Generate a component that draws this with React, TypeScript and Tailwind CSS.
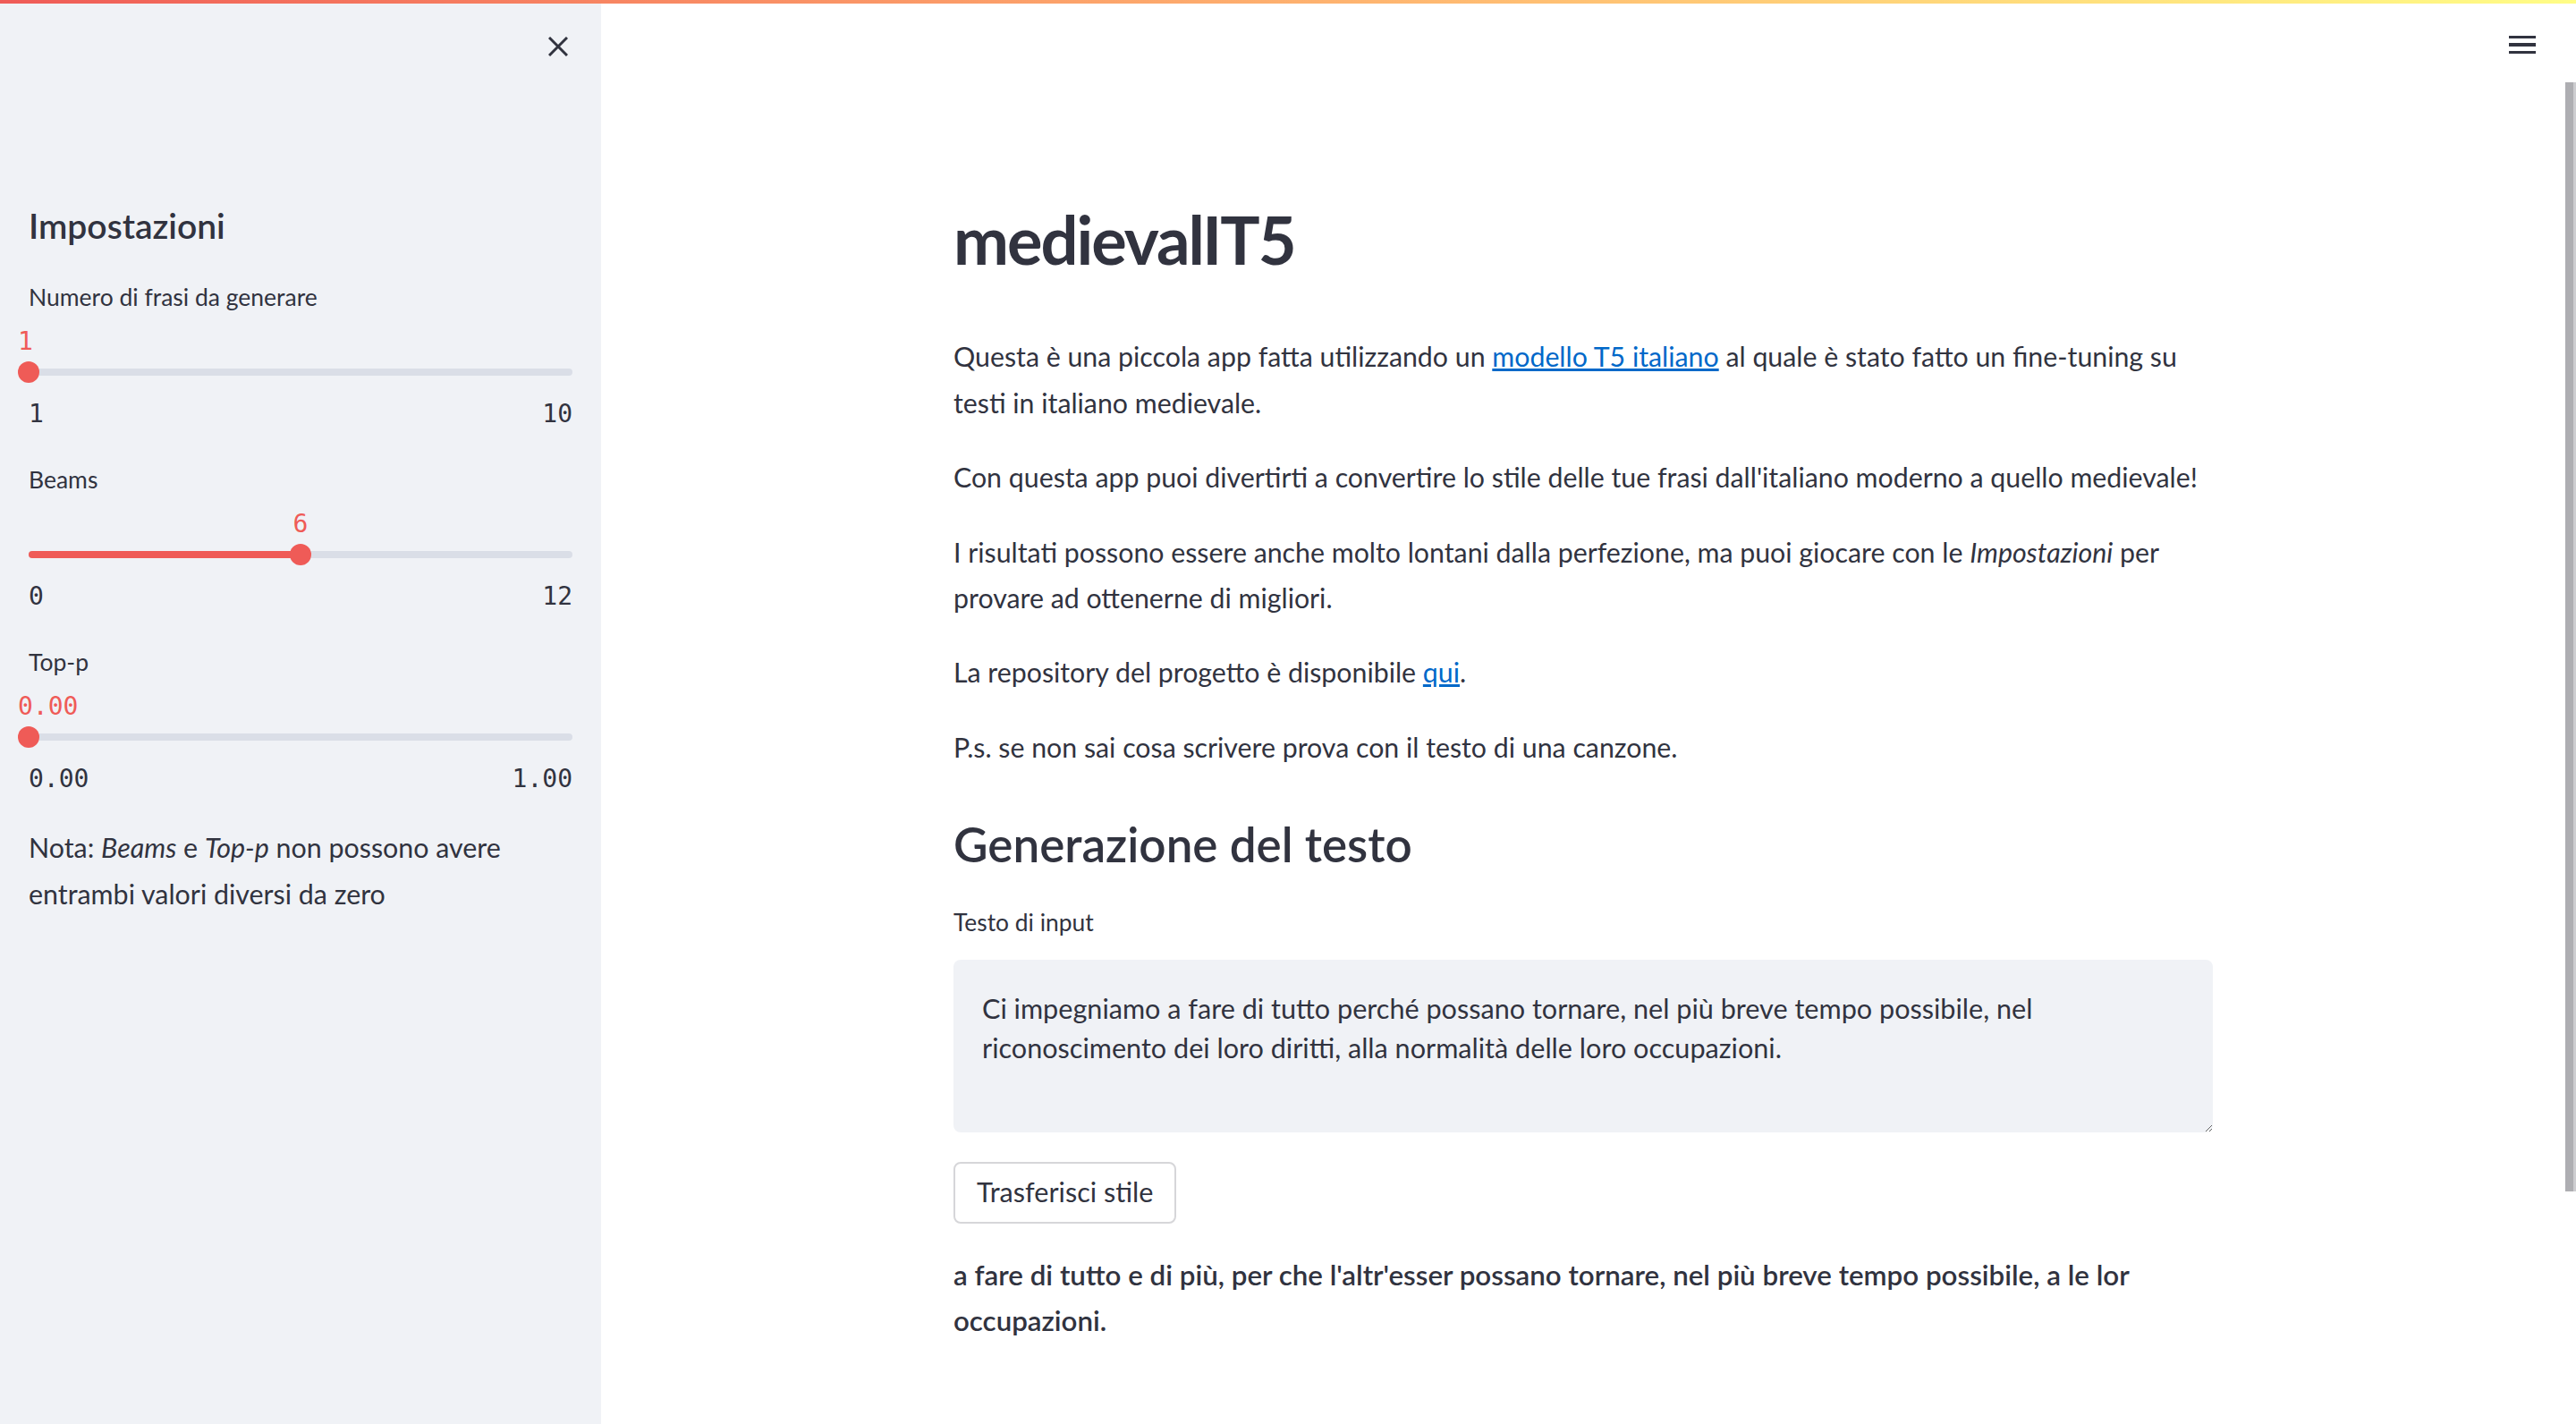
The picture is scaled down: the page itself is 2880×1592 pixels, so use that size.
import React from 'react';

const sans = "font-['Lato','Noto_Sans',sans-serif]";
const mono = "font-['DejaVu_Sans_Mono','Liberation_Mono',monospace]";

type SliderProps = {
    label: string;
    value: string;
    min: string;
    max: string;
    pct: number;
    first?: boolean;
};

function Slider({ label, value, min, max, pct, first }: SliderProps) {
    return (
        <div className={first ? 'mt-[29.6px]' : 'mt-[32.7px]'}>
            <div className="h-[44.8px] text-[26.5px] leading-[44.8px]">{label}</div>

            {/* value shown over the thumb */}
            <div className="relative mt-[10px] h-[36px]">
                <div
                    className={`absolute top-0 whitespace-nowrap text-[28px] leading-[36px] text-[#ef5b57] ${mono} ${pct === 0 ? '' : '-translate-x-1/2'}`}
                    style={pct === 0 ? { left: -12 } : { left: `${pct * 100}%` }}
                >
                    {value}
                </div>
            </div>

            {/* track */}
            <div className="relative mt-[3.5px] h-[24px]">
                <div className="absolute left-0 right-0 top-[8px] h-[8px] rounded-full bg-[#dadee7]" />
                <div
                    className="absolute left-0 top-[8px] h-[8px] rounded-full bg-[#ef5b57]"
                    style={{ width: `${pct * 100}%` }}
                />
                <div
                    className="absolute top-0 h-[24px] w-[24px] -translate-x-1/2 rounded-full bg-[#ef5b57]"
                    style={{ left: `${pct * 100}%` }}
                />
            </div>

            <div className={`mt-[17px] flex h-[36px] justify-between text-[28px] leading-[36px] text-[#31333f] ${mono}`}>
                <span>{min}</span>
                <span>{max}</span>
            </div>
        </div>
    );
}

export default function App() {
    return (
        <div className={`relative flex h-[1592px] w-[2880px] overflow-hidden bg-white text-[#31333f] ${sans}`}>

            {/* top decoration */}
            <div className="absolute left-0 right-0 top-0 z-10 h-[4px] bg-gradient-to-r from-[#ef5b57] to-[#fffd86]" />

            {/* Sidebar */}
            <aside className="flex h-full w-[672px] shrink-0 flex-col bg-[#f0f2f6] px-[32px]">
                <div className="flex justify-end pr-[5px] pt-[41px]">
                    <svg width="22" height="22" viewBox="0 0 22 22" className="text-[#31333f]">
                        <path d="M1 1 21 21 M21 1 1 21" stroke="currentColor" strokeWidth="3" strokeLinecap="butt" fill="none" />
                    </svg>
                </div>

                <h2 className="mt-[161px] text-[39px] font-semibold leading-[56px]">Impostazioni</h2>

                <Slider label="Numero di frasi da generare" value="1" min="1" max="10" pct={0} first />
                <Slider label="Beams" value="6" min="0" max="12" pct={0.5} />
                <Slider label="Top-p" value="0.00" min="0.00" max="1.00" pct={0} />

                <p className="mt-[33.5px] text-[30.4px] leading-[51.2px]">
                    Nota: <em>Beams</em> e <em>Top-p</em> non possono avere entrambi valori diversi da zero
                </p>
            </aside>

            {/* Main */}
            <main className="relative flex-1">
                <div className="mx-auto w-[1408px] pt-[215px]">
                    <h1 className="text-[74px] font-bold leading-[105.6px] tracking-[-2px]">medievalIT5</h1>

                    <div className="mt-[52.8px] flex flex-col gap-[32.3px] text-[30.3px] leading-[51.2px]">
                        <p>
                            Questa è una piccola app fatta utilizzando un{' '}
                            <a href="#" className="text-[#0068c9] underline">modello T5 italiano</a> al quale è stato fatto un fine-tuning su testi in italiano medievale.
                        </p>
                        <p>Con questa app puoi divertirti a convertire lo stile delle tue frasi dall'italiano moderno a quello medievale!</p>
                        <p>
                            I risultati possono essere anche molto lontani dalla perfezione, ma puoi giocare con le <em>Impostazioni</em> per provare ad ottenerne di migliori.
                        </p>
                        <p>
                            La repository del progetto è disponibile <a href="#" className="text-[#0068c9] underline">qui</a>.
                        </p>
                        <p>P.s. se non sai cosa scrivere prova con il testo di una canzone.</p>
                    </div>

                    <h2 className="mt-[49px] text-[53px] font-semibold leading-[67.2px]">Generazione del testo</h2>

                    <div className="mt-[32px] h-[44.8px] text-[26.4px] leading-[44.8px]">Testo di input</div>

                    <textarea
                        className={`mt-[18.6px] block h-[193px] w-full rounded-[8px] bg-[#f0f2f6] px-[32px] pb-[32px] pt-[33px] text-[30.6px] leading-[44.8px] text-[#31333f] outline-none ${sans}`}
                        defaultValue="Ci impegniamo a fare di tutto perché possano tornare, nel più breve tempo possibile, nel riconoscimento dei loro diritti, alla normalità delle loro occupazioni."
                    />

                    <button className="mt-[33px] h-[69px] rounded-[8px] border-2 border-[#d6d6d9] bg-white px-[24px] text-[30.6px] leading-[51.2px]">
                        Trasferisci stile
                    </button>

                    <p className="mt-[32.4px] text-[31.3px] font-semibold leading-[51.2px]">
                        a fare di tutto e di più, per che l'altr'esser possano tornare, nel più breve tempo possibile, a le lor occupazioni.
                    </p>
                </div>

                {/* header menu */}
                <div className="absolute right-[33px] top-[40px] flex w-[30px] flex-col gap-[5px]">
                    <div className="h-[3.3px] bg-[#31333f]" />
                    <div className="h-[3.3px] bg-[#31333f]" />
                    <div className="h-[3.3px] bg-[#31333f]" />
                </div>
            </main>

            {/* scrollbar */}
            <div className="flex w-[12px] shrink-0 flex-col pt-[92px]">
                <div className="flex h-[1240px]">
                    <div className="w-[9px] bg-[#aeaeb2]" />
                    <div className="w-[3px] bg-[#cdcdd0]" />
                </div>
            </div>
        </div>
    );
}
